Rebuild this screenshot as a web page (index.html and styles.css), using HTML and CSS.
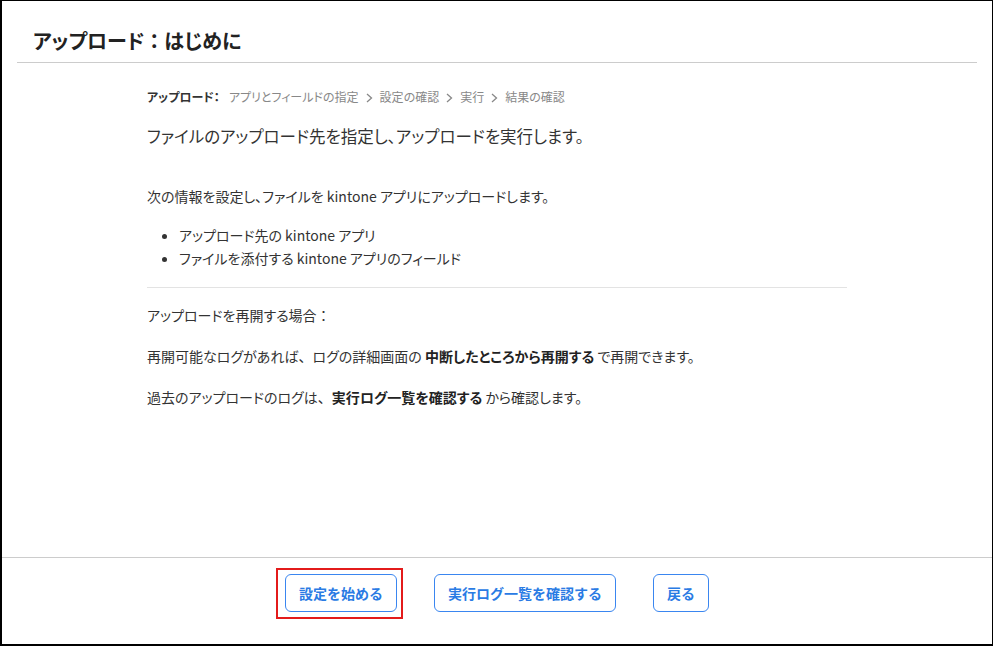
FILE: index.html
```html
<!DOCTYPE html>
<html lang="ja">
<head>
<meta charset="utf-8">
<title>アップロード：はじめに</title>
<link rel="stylesheet" href="styles.css">
</head>
<body>
<div class="frame">
  <header class="header">
    <h1 class="title">アップロード<span class="colon">：</span>はじめに</h1>
  </header>
  <main class="content">
    <nav class="crumbs">
      <span class="crumb-current">アップロード：</span>
      <span class="crumb">アプリとフィールドの指定</span>
      <svg class="sep" width="7" height="10" viewBox="0 0 7 10"><path d="M1 1 L5.5 5 L1 9" fill="none" stroke="#888" stroke-width="1.3"/></svg>
      <span class="crumb">設定の確認</span>
      <svg class="sep" width="7" height="10" viewBox="0 0 7 10"><path d="M1 1 L5.5 5 L1 9" fill="none" stroke="#888" stroke-width="1.3"/></svg>
      <span class="crumb">実行</span>
      <svg class="sep" width="7" height="10" viewBox="0 0 7 10"><path d="M1 1 L5.5 5 L1 9" fill="none" stroke="#888" stroke-width="1.3"/></svg>
      <span class="crumb">結果の確認</span>
    </nav>
    <h2 class="lead">ファイルのアップロード先を指定し、アップロードを実行します。</h2>
    <p class="para first">次の情報を設定し、ファイルを kintone アプリにアップロードします。</p>
    <ul class="list">
      <li>アップロード先の kintone アプリ</li>
      <li>ファイルを添付する kintone アプリのフィールド</li>
    </ul>
    <hr class="rule">
    <p class="para resume">アップロードを再開する場合<span class="colon">：</span></p>
    <p class="para">再開可能なログがあれば<span class="colon">、</span>ログの詳細画面の <strong>中断したところから再開する</strong> で再開できます。</p>
    <p class="para">過去のアップロードのログは<span class="colon">、</span><strong>実行ログ一覧を確認する</strong> から確認します。</p>
  </main>
  <footer class="footer">
    <button class="btn btn-highlight">設定を始める</button>
    <button class="btn">実行ログ一覧を確認する</button>
    <button class="btn">戻る</button>
  </footer>
</div>
</body>
</html>
```
FILE: styles.css
```css
html, body {
  margin: 0;
  padding: 0;
  background: #fff;
}
body {
  font-family: "Noto Sans CJK JP", "Noto Sans", sans-serif;
  color: #333;
  font-feature-settings: "palt";
}
.colon {
  font-feature-settings: normal;
}
.frame {
  width: 993px;
  height: 646px;
  box-sizing: border-box;
  border: 1px solid #000;
  border-left-width: 2px;
  border-bottom: 2px solid #000;
  display: flex;
  flex-direction: column;
}
.header {
  padding: 0 15px 0 15px;
}
.title {
  margin: 0;
  padding: 19px 0 0 16px;
  font-size: 20px;
  line-height: 42px;
  font-weight: 700;
  color: #222;
  border-bottom: 1px solid #cccccc;
}
.content {
  flex: 1;
  width: 700px;
  margin: 0 auto;
}
.crumbs {
  margin-top: 24px;
  font-size: 12px;
  line-height: 20px;
  color: #888;
  display: flex;
  align-items: center;
  gap: 7px;
}
.crumb-current {
  color: #333;
  font-weight: 700;
  margin-right: 2px;
}
.sep {
  display: block;
  margin-top: 1px;
}
.lead {
  margin: 17px 0 0;
  font-size: 16.5px;
  font-weight: 400;
  line-height: 24px;
  color: #333;
}
.para {
  margin: 19px 0 0;
  font-size: 14px;
  line-height: 22px;
}
.para.first {
  margin-top: 37px;
}
.para.resume {
  margin-top: 16px;
}
.para strong {
  font-weight: 700;
  color: #222;
}
.list {
  margin: 17px 0 0;
  padding-left: 32px;
  font-size: 14px;
  line-height: 23px;
}
.rule {
  margin: 17px 0 0;
  border: 0;
  border-top: 1px solid #e3e3e3;
  height: 0;
}
.footer {
  border-top: 1px solid #cccccc;
  height: 87px;
  box-sizing: border-box;
  padding-top: 16px;
  display: flex;
  justify-content: center;
  align-items: flex-start;
  gap: 37px;
}
.btn {
  position: relative;
  height: 38px;
  padding: 0 13px;
  border: 1px solid #3a86f0;
  border-radius: 6px;
  background: #fff;
  color: #2a7be4;
  font-family: "Noto Sans CJK JP", "Noto Sans", sans-serif;
  font-size: 14px;
  font-weight: 700;
  cursor: pointer;
}
.btn-highlight::after {
  content: "";
  position: absolute;
  top: -7px;
  bottom: -8px;
  left: -10px;
  right: -7px;
  border: 2px solid #e31b1b;
  pointer-events: none;
}
```
